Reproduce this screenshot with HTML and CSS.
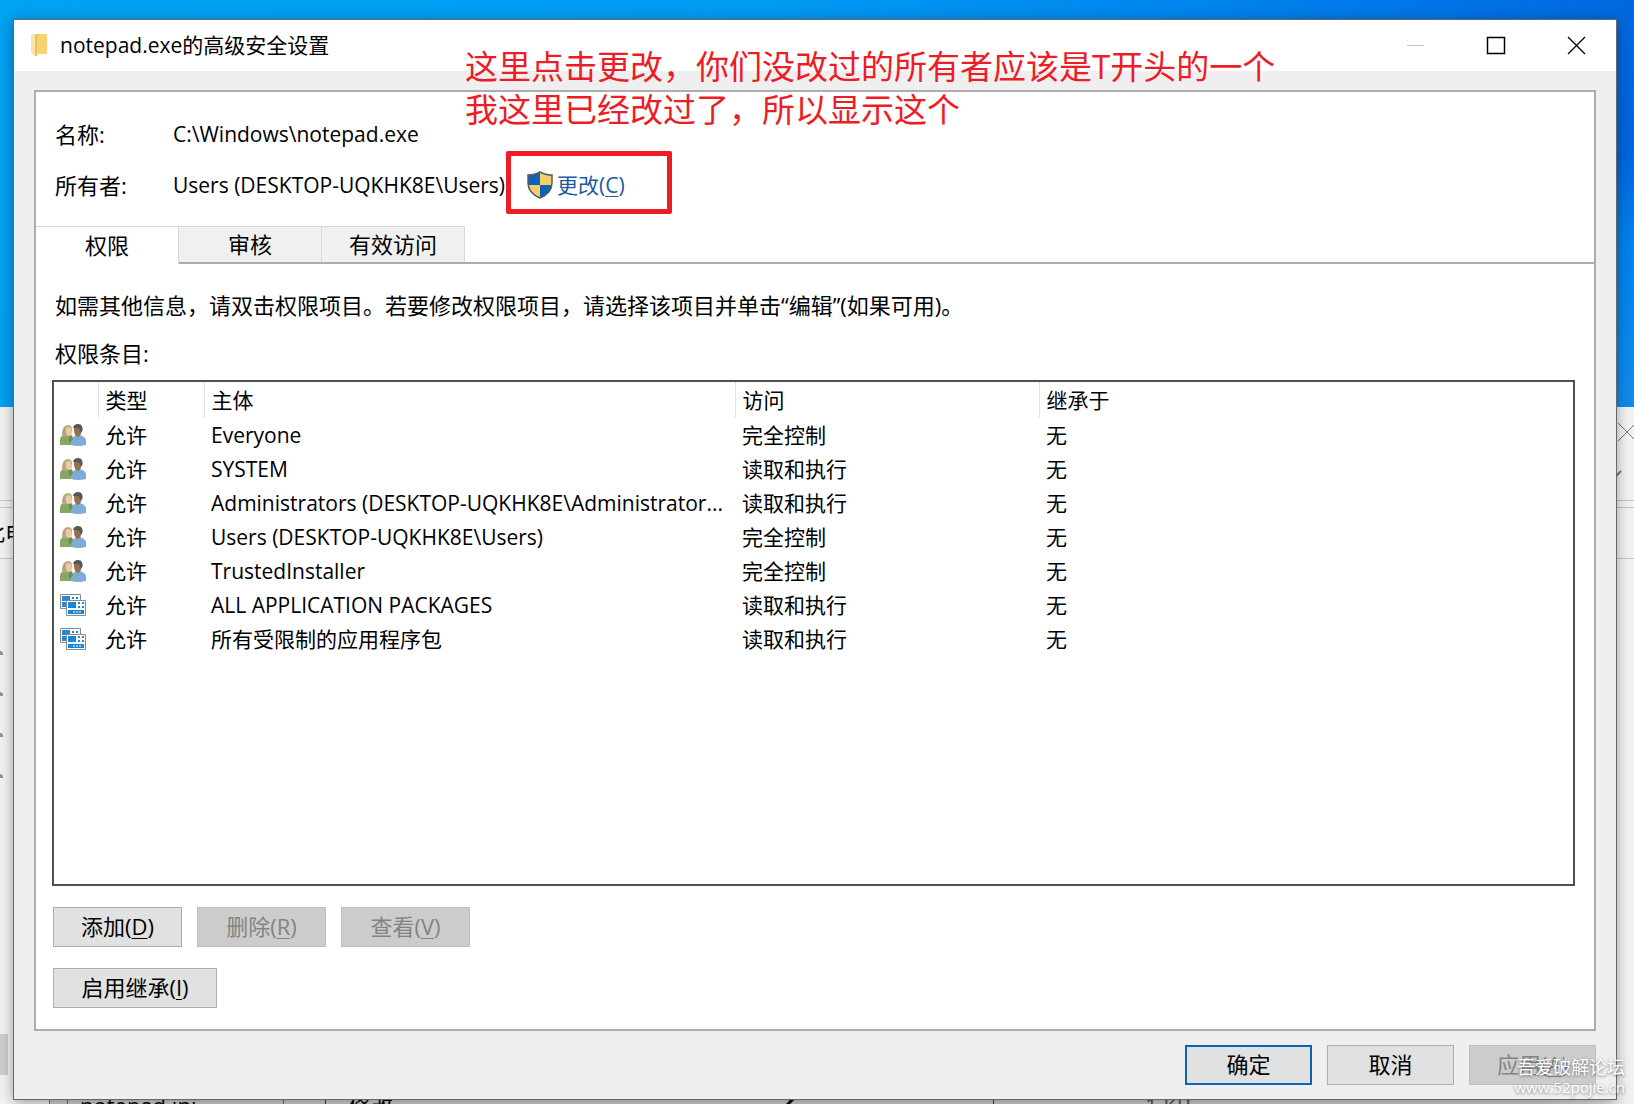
FILE: index.html
```
<!DOCTYPE html>
<html lang="zh-CN">
<head>
<meta charset="utf-8">
<meta name="viewport" content="width=device-width, initial-scale=1">
<title>notepad.exe的高级安全设置</title>
<link rel="stylesheet" href="styles.css">
</head>
<body class="desktop">
<svg class="defs" width="0" height="0" aria-hidden="true">
  <symbol id="users" viewBox="0 0 26 22">
    <path d="M0 21v-5q0-4 4-5l3-1 4 2 1 9z" fill="#86a866"/>
    <path d="M2 11q0-10 6-10 5 0 4 7l-1 3-5 2z" fill="#b9a57a"/>
    <path d="M6 4q3-2 5 0l1 4q-1 4-4 4-3-2-2-8z" fill="#ecc9a8"/>
    <path d="M11 21q-1-7 4-9l4-1q6 1 7 5v5q-8 2-15 0z" fill="#7fabd8"/>
    <path d="M14 5q0-4 4-4 5 0 4 6l-2 5-3 1q-3-2-3-8z" fill="#93704f"/>
    <path d="M13 4q1-4 5-4 6 0 4 8l-2-1q0-3-3-3z" fill="#55575b"/>
    <path d="M8 13l4-2 1 4-3 4z" fill="#6a9150"/>
  </symbol>
  <symbol id="package" viewBox="0 0 26 22">
    <path d="M.5.5h20v14H.5z" fill="#fff" stroke="#858b91"/>
    <path d="M2 2h8v5H2zM2 8h4v5H2z" fill="#2687d4"/>
    <path d="M12 3h2v2h-2zm4 0h2v2h-2z" fill="#2687d4"/>
    <path d="M6.500 6.500h19v15h-19z" fill="#fff" stroke="#858b91"/>
    <path d="M8 8h8v6H8zM8 16h16v4H8z" fill="#1687da"/>
    <path d="M18 8h2v2h-2zm4 0h2v2h-2zm-4 4h2v2h-2zm4 0h2v2h-2z" fill="#2687d4"/>
    <path d="M13 18h2m1 0h2m1 0h2" stroke="#fff"/>
  </symbol>
</svg>

<div class="explorer" aria-hidden="true">
  <div class="explorer-top">
    <svg class="explorer-close" width="20" height="20" viewBox="0 0 20 20"><path d="M1 1l18 18M19 1L1 19" stroke="#777"/></svg>
    <svg class="explorer-chevron" width="10" height="8" viewBox="0 0 10 8"><path d="M0 2l4 4 5-5" fill="none" stroke="#777" stroke-width="2"/></svg>
  </div>
  <div class="explorer-address">此电脑</div>
  <div class="explorer-body">
    <div class="explorer-pins"><i></i><i></i><i></i><i></i></div>
    <div class="explorer-thumb"></div>
  </div>
  <div class="explorer-files">
    <span class="file-name">notepad.ini</span>
    <span class="file-action">修改</span>
    <svg class="file-mark" width="10" height="6" viewBox="0 0 10 6"><path d="M1 6l6-6" stroke="#000" stroke-width="3"/></svg>
    <span class="file-size">1 KB</span>
  </div>
</div>

<main class="dialog">
  <header class="titlebar">
    <svg class="folder" width="18" height="24" viewBox="0 0 18 24"><path d="M6 1h10v20H6z" fill="#f5d36e"/><path d="M0 1h5v22l-5-2z" fill="#fae6a8"/><path d="M5 1h3l-2 4v18l-2 0V2z" fill="#e9c25c"/></svg>
    <h1>notepad.exe的高级安全设置</h1>
    <div class="controls">
      <button type="button" aria-label="最小化" disabled><svg width="20" height="20" viewBox="0 0 20 20"><path d="M2 10.500h17" stroke="#c4c4c4"/></svg></button>
      <button type="button" aria-label="最大化"><svg width="20" height="20" viewBox="0 0 20 20"><path d="M1.500 2.500h17v16h-17z" fill="none" stroke="#000" stroke-width="1.500"/></svg></button>
      <button type="button" aria-label="关闭"><svg width="20" height="20" viewBox="0 0 20 20"><path d="M1 2l17 17M18 2L1 19" stroke="#000" stroke-width="1.300"/></svg></button>
    </div>
  </header>

  <section class="panel">
    <dl class="info">
      <dt>名称:</dt>
      <dd>C:\Windows\notepad.exe</dd>
      <dt>所有者:</dt>
      <dd>Users (DESKTOP-UQKHK8E\Users)
        <a class="change" href="#owner">
          <svg width="26" height="28" viewBox="0 0 26 28"><path d="M13 1q5 3 12 3v8q0 10-12 15Q1 22 1 12V4q7 0 12-3z" fill="#f5cf67"/><path d="M13 1v13H1V4q7 0 12-3zM13 14h12q-1 9-12 13z" fill="#0e63b4"/><path d="M13 1q5 3 12 3v8q0 10-12 15Q1 22 1 12V4q7 0 12-3z" fill="none" stroke="#545e66" stroke-width="1.500"/></svg>
          <span>更改(<u>C</u>)</span>
        </a>
      </dd>
    </dl>
    <div class="tabs" role="tablist">
      <button type="button" role="tab" aria-selected="true">权限</button>
      <button type="button" role="tab" aria-selected="false">审核</button>
      <button type="button" role="tab" aria-selected="false">有效访问</button>
    </div>
    <div class="content">
      <p>如需其他信息，请双击权限项目。若要修改权限项目，请选择该项目并单击“编辑”(如果可用)。</p>
      <p id="entries-label">权限条目:</p>
      <div class="list">
        <table aria-labelledby="entries-label">
          <colgroup><col class="c-icon"><col class="c-type"><col class="c-name"><col class="c-access"><col></colgroup>
          <thead><tr><th></th><th>类型</th><th>主体</th><th>访问</th><th>继承于</th></tr></thead>
          <tbody>
            <tr><td><svg><use href="#users"/></svg></td><td>允许</td><td>Everyone</td><td>完全控制</td><td>无</td></tr>
            <tr><td><svg><use href="#users"/></svg></td><td>允许</td><td>SYSTEM</td><td>读取和执行</td><td>无</td></tr>
            <tr><td><svg><use href="#users"/></svg></td><td>允许</td><td>Administrators (DESKTOP-UQKHK8E\Administrator...</td><td>读取和执行</td><td>无</td></tr>
            <tr><td><svg><use href="#users"/></svg></td><td>允许</td><td>Users (DESKTOP-UQKHK8E\Users)</td><td>完全控制</td><td>无</td></tr>
            <tr><td><svg><use href="#users"/></svg></td><td>允许</td><td>TrustedInstaller</td><td>完全控制</td><td>无</td></tr>
            <tr><td><svg><use href="#package"/></svg></td><td>允许</td><td>ALL APPLICATION PACKAGES</td><td>读取和执行</td><td>无</td></tr>
            <tr><td><svg><use href="#package"/></svg></td><td>允许</td><td>所有受限制的应用程序包</td><td>读取和执行</td><td>无</td></tr>
          </tbody>
        </table>
      </div>
      <div class="actions">
        <button class="btn" type="button">添加(<u>D</u>)</button>
        <button class="btn" type="button" disabled>删除(<u>R</u>)</button>
        <button class="btn" type="button" disabled>查看(<u>V</u>)</button>
      </div>
      <div class="actions">
        <button class="btn wide" type="button">启用继承(<u>I</u>)</button>
      </div>
    </div>
  </section>

  <footer class="footer">
    <button class="btn primary" type="button">确定</button>
    <button class="btn" type="button">取消</button>
    <button class="btn" type="button" disabled>应用(<u>A</u>)</button>
  </footer>
</main>

<p class="note">这里点击更改，你们没改过的所有者应该是T开头的一个<br>我这里已经改过了，所以显示这个</p>
<div class="marker"></div>
<div class="watermark">吾爱破解论坛<small>www.52pojie.cn</small></div>
</body>
</html>
```
FILE: styles.css
```
* { box-sizing: border-box; }

.desktop {
  margin: 0;
  min-height: 100vh;
  display: flex;
  position: relative;
  overflow: hidden;
  padding: 20px 18px 5px 14px;
  background:
    linear-gradient(180deg, rgba(0, 140, 240, 0) 14%, rgba(0, 140, 240, .75) 22%, rgba(20, 150, 240, .8) 37%) right / 18px 100% no-repeat,
    linear-gradient(100deg, #00a2f2 0%, #009cf2 40%, #0085ee 65%, #0062dc 94%, #0062dc 100%);
  color: #000;
  font: 22px/30px "Open Sans", "Noto Sans CJK SC", sans-serif;
}

.defs { position: absolute; }
p, h1, dl, dd { margin: 0; }
button { font: inherit; color: inherit; }
u { text-underline-offset: 3px; text-decoration-thickness: 1px; }

/* Explorer window behind the dialog */
.explorer {
  position: absolute;
  inset: 407px 0 0 0;
  display: flex;
  flex-direction: column;
  overflow: hidden;
  background: #f3f3f3;
}
.explorer-top {
  height: 94px;
  display: flex;
  flex-direction: column;
  align-items: flex-end;
  gap: 28px;
  padding-top: 15px;
  border-bottom: 1px solid #c6c6c6;
}
.explorer-close { margin-right: -3px; }
.explorer-chevron { margin-right: 12px; }
.explorer-address {
  height: 52px;
  margin-top: 6px;
  padding-top: 9px;
  border: solid #c6c6c6;
  border-width: 1px 0;
  text-indent: -17px;
}
.explorer-body { flex: 1; position: relative; }
.explorer-pins { display: grid; gap: 37px; padding-top: 92px; }
.explorer-pins i { width: 3px; height: 4px; background: #8d949c; border-radius: 0 3px 0 0; }
.explorer-thumb { position: absolute; left: 0; bottom: 24px; width: 8px; height: 41px; background: #cdcfd1; }
.explorer-files {
  position: relative;
  height: 5px;
  margin-left: 49px;
  border-left: 1px solid #777;
  background: linear-gradient(90deg, #d2d2d2 94%, #f0f0f0 99%);
}
.explorer-files span { position: absolute; top: -9px; }
.file-name { left: 17px; width: 217px; padding-left: 12px; border: solid #666; border-width: 0 1px; }
.file-action { left: 275px; padding-left: 23px; border-left: 1px solid #333; }
.file-mark { position: absolute; left: 736px; top: 0; }
.file-size { left: 943px; padding-left: 151px; border-left: 1px solid #333; color: #555; }

/* Security dialog */
.dialog {
  position: relative;
  flex: 1;
  min-width: 0;
  display: flex;
  flex-direction: column;
  background: #efefef;
  outline: 1px solid #62686c;
  box-shadow: 0 3px 14px rgba(0, 0, 0, .4);
}
.titlebar {
  display: flex;
  align-items: center;
  height: 51px;
  padding: 0 0 2px 17px;
  background: #fff;
}
.titlebar h1 { margin-left: 11px; font-size: 21px; font-weight: 400; }
.controls { display: flex; margin: 0 -1px 0 auto; }
.controls button {
  display: grid;
  place-items: center;
  width: 81px;
  height: 49px;
  padding: 0;
  border: 0;
  background: none;
}

.panel {
  flex: 1;
  display: flex;
  flex-direction: column;
  margin: 19px 20px 0;
  border: 2px solid #adadad;
  background: #fff;
}
.info {
  display: grid;
  grid-template-columns: 118px 1fr;
  row-gap: 21px;
  padding: 27px 19px 0;
}
.info dd { display: flex; align-items: center; font-size: 21px; white-space: nowrap; }
.change {
  display: flex;
  align-items: center;
  gap: 4px;
  margin-left: 22px;
  color: #1c5b9b;
  text-decoration: none;
}

.tabs { display: flex; height: 38px; margin-top: 26px; border-bottom: 2px solid #adadad; }
.tabs button {
  width: 143px;
  height: 36px;
  padding: 0 0 2px;
  border: solid #d9d9d9;
  border-width: 1px 1px 0 0;
  background: #f0f0f0;
}
.tabs button[aria-selected="true"] { height: 38px; background: #fff; }

.content { flex: 1; display: flex; flex-direction: column; padding: 26px 19px 21px 16px; }
.content p { padding-left: 3px; margin-bottom: 18px; }
.content #entries-label { margin-bottom: 12px; }
.list { flex: 1; border: 2px solid #505050; }
.list table { width: 100%; table-layout: fixed; border-collapse: collapse; font-size: 21px; }
.list th, .list td { height: 34px; padding: 0 0 0 7px; text-align: left; font-weight: 400; white-space: nowrap; line-height: 34px; }
.list td:first-child { padding-left: 6px; }
.list th { height: 36px; border-right: 1px solid #e2e2e2; }
.list th:last-child { border-right: 0; }
.list svg { display: block; width: 26px; height: 22px; }
.c-icon { width: 44px; }
.c-type { width: 106px; }
.c-name { width: 531px; }
.c-access { width: 304px; }

.actions { display: flex; gap: 15px; margin: 21px 0 0 1px; }
.btn {
  min-width: 129px;
  height: 40px;
  padding: 0 0 2px;
  border: 1px solid #adadad;
  background: #e1e1e1;
}
.btn.wide { min-width: 164px; }
.btn.primary { border: 2px solid #0a63b5; }
.btn:disabled { border-color: #bfbfbf; background: #ccc; color: #838383; }

.footer { display: flex; justify-content: flex-end; gap: 15px; padding: 14px 20px; }
.footer .btn { min-width: 127px; }

/* Callouts over the dialog */
.note {
  position: absolute;
  left: 465px;
  top: 45px;
  color: #ee1c24;
  font-size: 33px;
  line-height: 43px;
  white-space: nowrap;
}
.marker {
  position: absolute;
  left: 506px;
  top: 151px;
  width: 166px;
  height: 63px;
  border: 5px solid #ee1c24;
  border-radius: 2px;
}
.watermark {
  position: absolute;
  right: 9px;
  bottom: 7px;
  display: grid;
  color: #fff;
  font-size: 18px;
  line-height: 20px;
  text-align: right;
  text-shadow: 0 1px 3px rgba(0, 0, 0, .5);
}
.watermark small { font-size: 15px; }
```
